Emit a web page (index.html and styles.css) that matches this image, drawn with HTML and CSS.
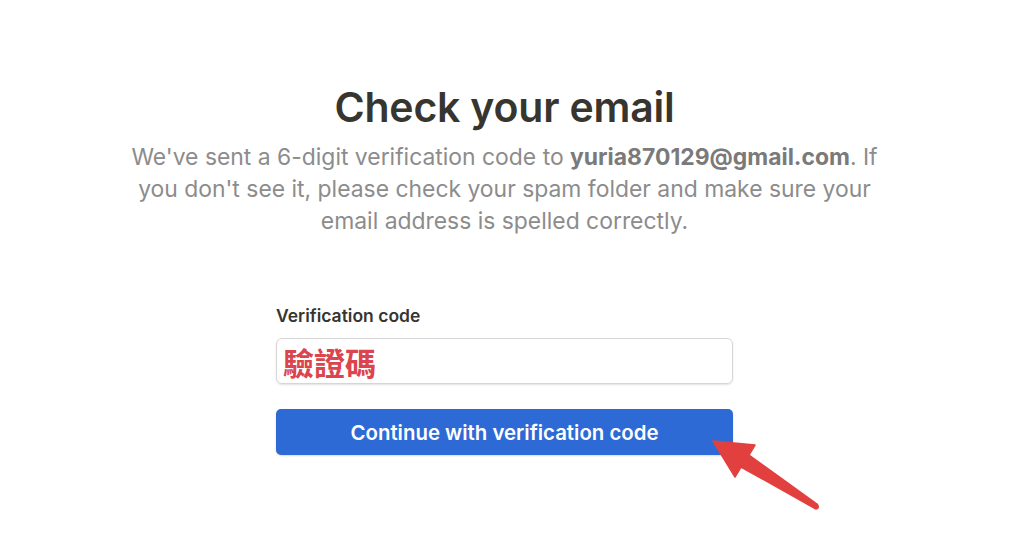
FILE: index.html
```html
<!DOCTYPE html>
<html lang="en">
<head>
<meta charset="utf-8">
<title>Check your email</title>
<link rel="stylesheet" href="styles.css">
</head>
<body>
<main class="page">
  <h1 class="title">Check your email</h1>
  <p class="lead">We've sent a 6-digit verification code to <strong>yuria870129@gmail.com</strong>. If you don't see it, please check your spam folder and make sure your email address is spelled correctly.</p>
  <form class="form">
    <label class="label" for="code">Verification code</label>
    <div class="input" id="code"><span class="code-text">驗證碼</span></div>
    <button type="button" class="btn">Continue with verification code</button>
  </form>
</main>
<svg class="arrow" width="130" height="90" viewBox="0 0 130 90">
  <path d="M13 11 L55 15 L49 25 L117 74 Q120 78 116 79 L41 37 L35 47 Z" fill="#e2403f" stroke="#e2403f" stroke-width="1.5" stroke-linejoin="round"/>
</svg>
</body>
</html>
```
FILE: styles.css
```css
html, body {
  margin: 0;
  padding: 0;
  background: #fff;
}
body {
  font-family: Inter, "Noto Sans", sans-serif;
  position: relative;
  width: 1024px;
  height: 539px;
  overflow: hidden;
}
.page {
  display: flex;
  flex-direction: column;
  align-items: center;
  padding: 83px 15px 0 0;
}
.title {
  margin: 0;
  font-size: 41px;
  line-height: 48px;
  font-weight: 600;
  color: #37352f;
  letter-spacing: -0.2px;
}
.lead {
  margin: 10px 0 0;
  max-width: 770px;
  text-align: center;
  font-size: 22.9px;
  line-height: 32px;
  color: #8c8c8c;
}
.lead strong {
  color: #7a7a7a;
  font-weight: 700;
}
.form {
  width: 457px;
  margin-top: 68px;
  display: flex;
  flex-direction: column;
}
.label {
  font-size: 17.5px;
  font-weight: 600;
  color: #37352f;
  line-height: 22px;
  margin-bottom: 11px;
}
.input {
  height: 46px;
  box-sizing: border-box;
  border: 1px solid #d6d6d6;
  border-radius: 6px;
  box-shadow: 0 1px 2px rgba(0,0,0,0.12);
  display: flex;
  align-items: center;
  padding: 0 6px;
}
.code-text {
  font-family: "Noto Sans CJK TC", "Noto Sans CJK SC", sans-serif;
  font-weight: 700;
  font-size: 31px;
  color: #db454d;
  line-height: 1;
}
.btn {
  margin-top: 25px;
  height: 46px;
  border: none;
  border-radius: 5px;
  background: #2d6ad6;
  color: #fff;
  font-family: Inter, "Noto Sans", sans-serif;
  font-size: 20.4px;
  font-weight: 600;
  box-shadow: 0 1px 2px rgba(0,0,0,0.15);
}
.arrow {
  position: absolute;
  left: 700px;
  top: 430px;
}
```
